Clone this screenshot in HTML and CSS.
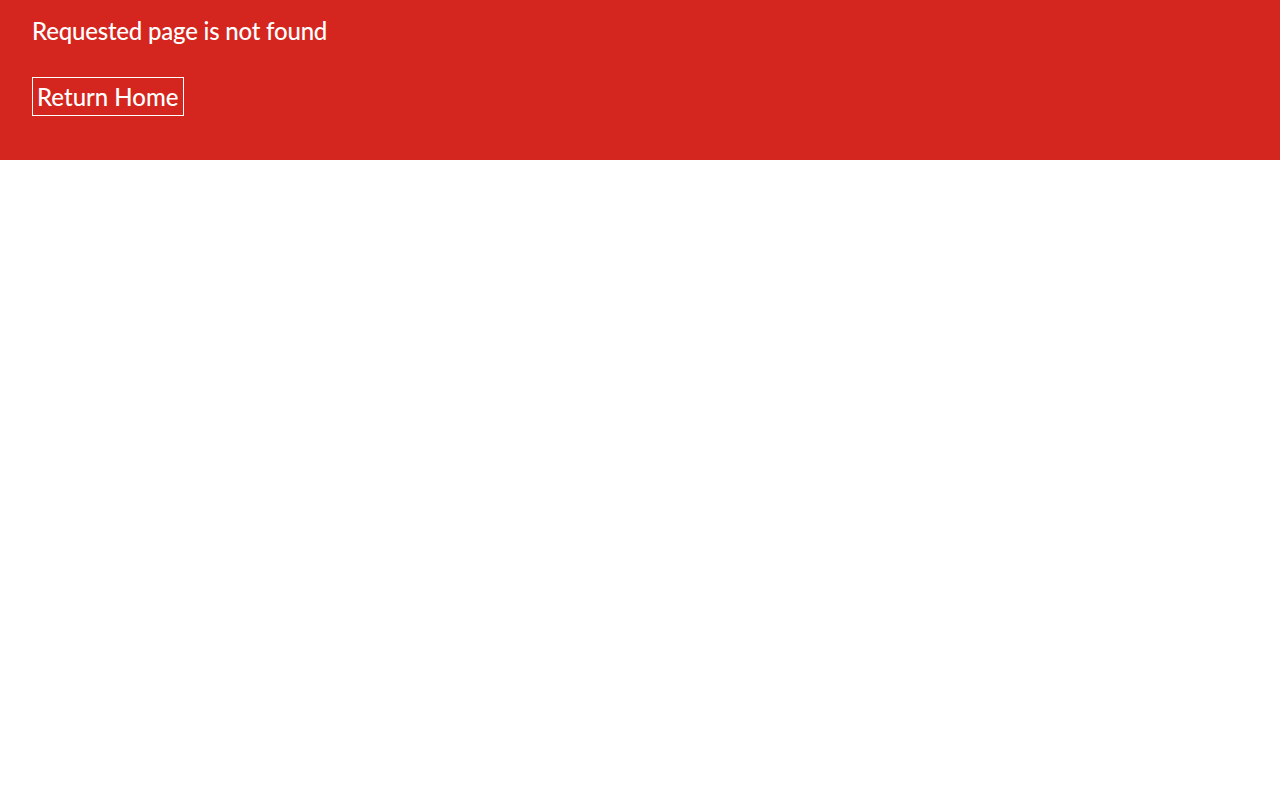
FILE: index.html
```html
<!DOCTYPE html>
<html lang="en">
<head>
<meta charset="utf-8">
<title>Page not found</title>
<link rel="stylesheet" href="styles.css">
</head>
<body>
<header class="banner">
  <h1 class="banner-title">Requested page is not found</h1>
  <a class="return-btn" href="#">Return Home</a>
</header>
</body>
</html>
```

FILE: styles.css
```css
html, body {
  margin: 0;
  padding: 0;
  background: #ffffff;
}
body {
  font-family: Lato, "Open Sans", sans-serif;
}
.banner {
  background: #d4261e;
  color: #ffffff;
  height: 160px;
  box-sizing: border-box;
  padding: 17px 32px 0;
  display: flex;
  flex-direction: column;
  align-items: flex-start;
  gap: 31px;
}
.banner-title {
  margin: 0;
  font-size: 24px;
  font-weight: 500;
  letter-spacing: -0.2px;
  line-height: 1.2;
}
.return-btn {
  color: #ffffff;
  text-decoration: none;
  font-size: 24px;
  font-weight: 500;
  line-height: 1.2;
  padding: 5px 4px 3px;
  border: 1px solid #ffffff;
}
```
